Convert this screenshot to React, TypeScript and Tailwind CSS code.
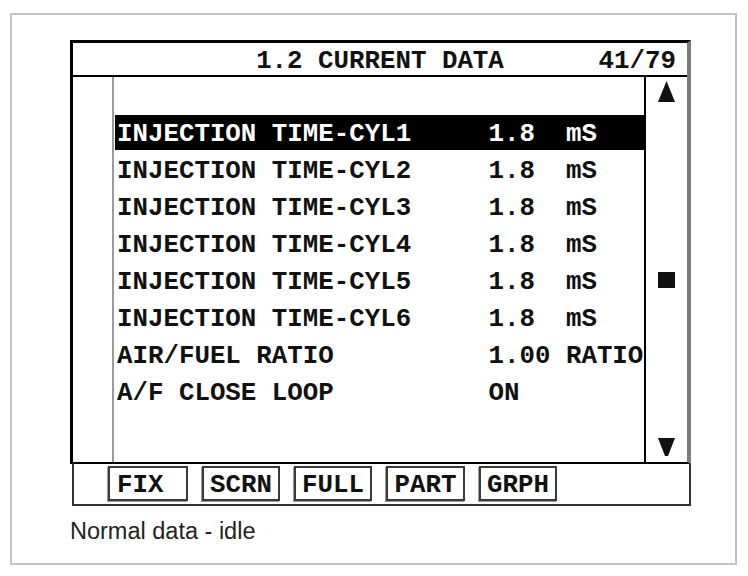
import React from 'react'

type Row = { label: string; value: string; unit: string }

const rows: Row[] = [
  { label: 'INJECTION TIME-CYL1', value: '1.8', unit: 'mS' },
  { label: 'INJECTION TIME-CYL2', value: '1.8', unit: 'mS' },
  { label: 'INJECTION TIME-CYL3', value: '1.8', unit: 'mS' },
  { label: 'INJECTION TIME-CYL4', value: '1.8', unit: 'mS' },
  { label: 'INJECTION TIME-CYL5', value: '1.8', unit: 'mS' },
  { label: 'INJECTION TIME-CYL6', value: '1.8', unit: 'mS' },
  { label: 'AIR/FUEL RATIO', value: '1.00', unit: 'RATIO' },
  { label: 'A/F CLOSE LOOP', value: 'ON', unit: '' },
]

const buttons = [
  { label: 'FIX', w: 'w-[80px]', align: 'justify-start pl-[7px]' },
  { label: 'SCRN', w: 'w-[78px]', align: 'justify-center' },
  { label: 'FULL', w: 'w-[78px]', align: 'justify-center' },
  { label: 'PART', w: 'w-[79px]', align: 'justify-center' },
  { label: 'GRPH', w: 'w-[78px]', align: 'justify-center' },
]

const mono = "font-['Liberation_Mono',monospace] font-bold text-[25.8px]"

export default function App() {
  const selected = 0

  return (
    <div className="min-h-[576px] w-[748px] bg-white pl-[10px] pt-[13px]">
      <div className="h-[552px] w-[727px] border-2 border-[#c4c4c4] pl-[58px] pt-[25px]">
        <div className="w-[621px]">
          {/* screen */}
          <div className="border-l-[3px] border-t-[3px] border-b-2 border-r-[4px] border-black border-r-[#7c7c7c]">
            <div className={`grid h-[34px] grid-cols-[1fr_auto_1fr] items-start border-b-2 border-black leading-[37px] text-[#111] ${mono}`}>
              <span />
              <span>1.2 CURRENT DATA</span>
              <span className="justify-self-end pr-[11px]">41/79</span>
            </div>

            <div className="flex h-[385px]">
              <div className="w-[41px] border-r-2 border-[#9a9a9a]" />

              <div className="w-[530px] pt-[37px]">
                {rows.map((r, i) => (
                  <div key={r.label} className="h-[37px] py-px pl-px">
                    <div
                      className={`flex h-[35px] items-start pl-[2px] leading-[40px] ${mono} ${
                        i === selected ? 'bg-black text-white' : 'text-[#111]'
                      }`}
                    >
                      <span className="w-[24ch]">{r.label}</span>
                      <span className="w-[5ch]">{r.value}</span>
                      <span>{r.unit}</span>
                    </div>
                  </div>
                ))}
              </div>

              <div className="flex w-[43px] flex-col items-center border-l-2 border-black pb-[6px] pt-[4px]">
                <svg width="17" height="21" viewBox="0 0 17 21">
                  <polygon points="8.5,0 17,21 0,21" fill="#111" />
                </svg>
                <div className="mt-[170px] h-[16px] w-[17px] bg-[#111]" />
                <svg className="mt-auto" width="17" height="18" viewBox="0 0 17 18">
                  <polygon points="0,0 17,0 10,18 7,18" fill="#111" />
                </svg>
              </div>
            </div>
          </div>

          {/* function keys */}
          <div className="ml-[2px] flex h-[42px] w-[619px] gap-[14px] border-x-2 border-b-2 border-[#333] pl-[34px] pt-[2px]">
            {buttons.map(b => (
              <div
                key={b.label}
                className={`flex h-[35px] items-start border-2 border-[#3a3a3a] shadow-[-1px_1px_0_#9a9a9a] leading-[35px] text-[#111] ${b.w} ${b.align} ${mono}`}
              >
                {b.label}
              </div>
            ))}
          </div>

          <p className="mt-[14px] font-['Liberation_Sans',Arial,sans-serif] text-[23.5px] leading-[23px] text-[#222]">
            Normal data - idle
          </p>
        </div>
      </div>
    </div>
  )
}
